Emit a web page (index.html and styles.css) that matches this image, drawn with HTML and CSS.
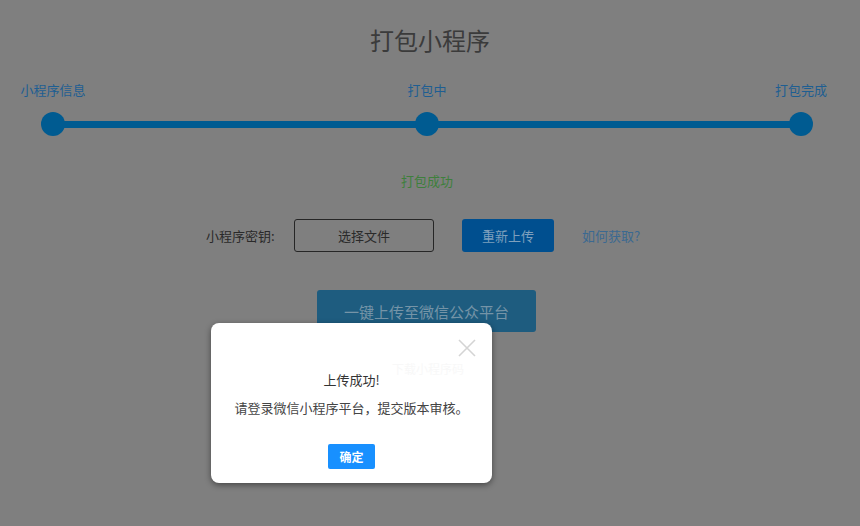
FILE: index.html
```html
<!DOCTYPE html>
<html lang="zh-CN">
<head>
<meta charset="utf-8">
<title>打包小程序</title>
<link rel="stylesheet" href="styles.css">
</head>
<body>
<div class="page">
  <h1 class="title">打包小程序</h1>
  <div class="steps">
    <div class="labels">
      <span class="label">小程序信息</span>
      <span class="label">打包中</span>
      <span class="label">打包完成</span>
    </div>
    <div class="track">
      <span class="dot"></span><span class="line"></span><span class="dot"></span><span class="line"></span><span class="dot"></span>
    </div>
  </div>
  <div class="status">打包成功</div>
  <div class="key-row">
    <span class="key-label">小程序密钥:</span>
    <button class="file-btn">选择文件</button>
    <button class="reupload-btn">重新上传</button>
    <a class="help-link">如何获取?</a>
  </div>
  <div class="publish-wrap">
    <button class="publish-btn">一键上传至微信公众平台</button>
  </div>
</div>
<div class="modal">
  <span class="close">
    <svg width="18" height="18" viewBox="0 0 18 18"><path d="M1 1 L17 17 M17 1 L1 17" stroke="#d4d4d4" stroke-width="1.6" fill="none"/></svg>
  </span>
  <span class="ghost">下载小程序码</span>
  <p class="msg-title">上传成功!</p>
  <p class="msg-body">请登录微信小程序平台，提交版本审核。</p>
  <div class="modal-foot"><button class="ok-btn">确定</button></div>
</div>
</body>
</html>
```

FILE: styles.css
```css
html, body {
  margin: 0;
  padding: 0;
  background: #7f7f7f;
  font-family: "Noto Sans CJK SC", "Noto Sans", sans-serif;
}
.page {
  width: 860px;
  height: 526px;
  padding-top: 24px;
  box-sizing: border-box;
}
.title {
  margin: 0;
  text-align: center;
  font-size: 24px;
  font-weight: 400;
  line-height: 32px;
  color: #3b3b3b;
}
.steps {
  margin-top: 26px;
}
.labels {
  display: flex;
  justify-content: space-between;
  padding: 0 19px 0 13px;
}
.label {
  width: 80px;
  text-align: center;
  font-size: 13px;
  line-height: 16px;
  color: #1e5e92;
}
.track {
  display: flex;
  align-items: center;
  padding: 0 47px 0 41px;
  margin-top: 14px;
}
.dot {
  width: 24px;
  height: 24px;
  border-radius: 50%;
  background: #005b91;
  flex: none;
}
.line {
  flex: 1;
  height: 7px;
  background: #005b91;
  margin: 0 -2px;
}
.status {
  margin-top: 37px;
  text-align: center;
  font-size: 13px;
  line-height: 16px;
  color: #3e7f3c;
  padding-right: 6px;
}
.key-row {
  display: flex;
  align-items: center;
  margin-top: 30px;
  padding-left: 206px;
  height: 33px;
}
.key-label {
  font-size: 13px;
  color: #2a2a2a;
  width: 88px;
}
.file-btn {
  width: 140px;
  height: 33px;
  box-sizing: border-box;
  border: 1px solid #262626;
  border-radius: 3px;
  background: transparent;
  font-family: inherit;
  font-size: 13px;
  color: #2a2a2a;
}
.reupload-btn {
  margin-left: 28px;
  width: 92px;
  height: 33px;
  border: none;
  border-radius: 3px;
  background: #004f8f;
  color: #7ea0bd;
  font-family: inherit;
  font-size: 13px;
}
.help-link {
  margin-left: 28px;
  font-size: 13px;
  color: #3b6991;
}
.publish-wrap {
  display: flex;
  justify-content: center;
  margin-top: 38px;
  padding-right: 7px;
}
.publish-btn {
  width: 219px;
  height: 42px;
  border: none;
  border-radius: 3px;
  background: #1e5c7f;
  color: #7594a7;
  font-family: inherit;
  font-size: 15px;
}
.modal {
  position: absolute;
  left: 211px;
  top: 323px;
  width: 281px;
  height: 160px;
  background: #fff;
  border-radius: 8px;
  box-shadow: 0 2px 6px rgba(0, 0, 0, 0.45);
  display: flex;
  flex-direction: column;
  align-items: center;
}
.close {
  position: absolute;
  right: 16px;
  top: 16px;
  width: 18px;
  height: 18px;
}
.close svg { display: block; }
.ghost {
  position: absolute;
  left: 181px;
  top: 37px;
  font-size: 12px;
  color: #f8f8f8;
}
.msg-title {
  margin: 48px 0 0;
  font-size: 13px;
  line-height: 18px;
  color: #333;
}
.msg-body {
  margin: 10px 0 0;
  font-size: 13px;
  line-height: 18px;
  color: #444;
}
.modal-foot {
  margin-top: 26px;
}
.ok-btn {
  width: 47px;
  height: 25px;
  border: none;
  border-radius: 2px;
  background: #1890ff;
  color: #fff;
  font-family: inherit;
  font-size: 12px;
  font-weight: 700;
  padding: 0;
}
```
